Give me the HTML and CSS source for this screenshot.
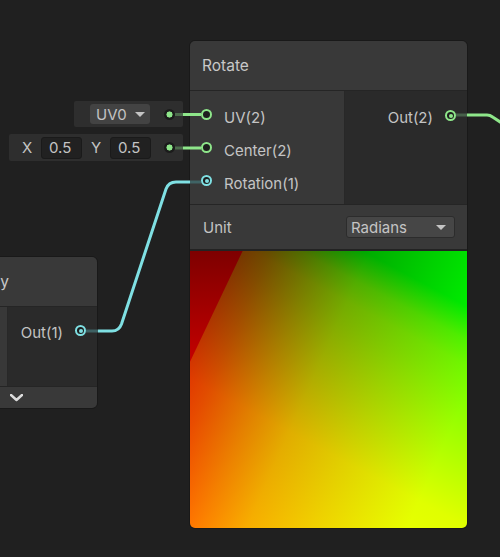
FILE: index.html
```html
<!DOCTYPE html>
<html>
<head>
<meta charset="utf-8">
<link rel="stylesheet" href="styles.css">
</head>
<body>
<div class="canvas">
  <div class="node node-multiply">
    <div class="title">Multiply</div>
    <div class="ports">
      <div class="inputs"></div>
      <div class="outputs">
        <div class="port-row out-row">
          <span class="label">Out(1)</span>
          <span class="port cyan connected"></span>
        </div>
      </div>
    </div>
    <div class="footer">
      <svg class="chevron" width="13" height="8" viewBox="0 0 13 8"><polyline points="1,1 6.5,6 12,1" fill="none" stroke="#dcdcdc" stroke-width="2.4" stroke-linecap="round" stroke-linejoin="round"/></svg>
    </div>
  </div>

  <div class="inline inline-uv">
    <div class="uv-button"><span>UV0</span><span class="tri"></span></div>
    <span class="dot"></span>
  </div>

  <div class="inline inline-xy">
    <span class="axis">X</span>
    <span class="field">0.5</span>
    <span class="axis">Y</span>
    <span class="field">0.5</span>
    <span class="dot"></span>
  </div>

  <div class="node node-rotate">
    <div class="title">Rotate</div>
    <div class="ports">
      <div class="inputs">
        <div class="port-row in-row"><span class="port green"></span><span class="label">UV(2)</span></div>
        <div class="port-row in-row"><span class="port green"></span><span class="label">Center(2)</span></div>
        <div class="port-row in-row"><span class="port cyan connected"></span><span class="label">Rotation(1)</span></div>
      </div>
      <div class="outputs">
        <div class="port-row out-row">
          <span class="label">Out(2)</span>
          <span class="port green connected"></span>
        </div>
      </div>
    </div>
    <div class="unit-row">
      <span class="label">Unit</span>
      <div class="dropdown"><span>Radians</span><span class="tri"></span></div>
    </div>
    <div class="preview"></div>
  </div>

  <svg class="edges" width="500" height="557" viewBox="0 0 500 557">
    <g fill="none" stroke-width="3">
      <path d="M175,114.5 H183" stroke="#4c6b4c"/>
      <path d="M183,114.5 H201" stroke="#8ee68a"/>
      <path d="M175,148 H183" stroke="#4c6b4c"/>
      <path d="M183,148 H201" stroke="#8ee68a"/>
      <path d="M456,115 H467" stroke="#47604a"/>
      <path d="M467,115 H487 Q490,115 493,117.2 L501,122.5" stroke="#8ee68a"/>
      <path d="M86,331 H98" stroke="#3e6163"/>
      <path d="M98,331 H112 Q119,331 121.5,324 L166,189 Q168.5,182 176,182 H190" stroke="#7fe0e3"/>
      <path d="M190,182 H201" stroke="#3f6365"/>
    </g>
  </svg>
</div>
</body>
</html>
```

FILE: styles.css
```css
* { box-sizing: border-box; }
html, body {
  margin: 0;
  padding: 0;
  background: #202020;
}
body {
  font-family: Inter, "Noto Sans", "Liberation Sans", sans-serif;
  color: #c4c4c4;
  font-size: 15px;
}
.canvas {
  position: relative;
  width: 500px;
  height: 557px;
  overflow: hidden;
  background: #202020;
}

/* nodes */
.node {
  position: absolute;
  border: 1px solid #191919;
  border-radius: 6px;
  overflow: hidden;
  display: flex;
  flex-direction: column;
}
.node-rotate { left: 189px; top: 40px; width: 279px; }
.node-multiply { left: -62px; top: 256px; width: 160px; }

.title {
  height: 50px;
  background: #393939;
  border-bottom: 1px solid #252525;
  display: flex;
  align-items: center;
  padding-left: 12px;
  font-size: 15.5px;
  color: #c8c8c8;
}
.ports {
  display: flex;
}
.node-rotate .ports { height: 113px; }
.node-multiply .ports { height: 79px; }
.inputs {
  background: #383838;
  border-right: 1px solid #282828;
  padding-top: 10px;
}
.node-rotate .inputs { width: 155px; }
.node-multiply .inputs { width: 69px; }
.outputs {
  flex: 1;
  background: #2a2a2a;
  padding-top: 10px;
}
.node-multiply .outputs { padding-top: 9px; }

.port-row {
  height: 33px;
  display: flex;
  align-items: center;
}
.in-row { padding-left: 11px; gap: 12px; }
.out-row { justify-content: flex-end; padding-right: 11px; gap: 12px; }

.port {
  width: 11px;
  height: 11px;
  border-radius: 50%;
  border: 2px solid;
  background: #1e1e1e;
  position: relative;
  top: -3px;
  flex: none;
}
.out-row .port { top: -2px; }
.port.green { border-color: #8ee68a; }
.port.cyan { border-color: #7fe0e3; }
.port.connected::after {
  content: "";
  position: absolute;
  left: 1.5px;
  top: 1.5px;
  width: 4px;
  height: 4px;
  border-radius: 50%;
}
.port.green.connected::after { background: #8ee68a; }
.port.cyan.connected::after { background: #7fe0e3; }

.footer {
  height: 22px;
  background: #393939;
  border-top: 1px solid #252525;
  display: flex;
  align-items: center;
  padding-left: 71px;
}

.unit-row {
  height: 47px;
  background: #393939;
  border-top: 1px solid #252525;
  border-bottom: 2px solid #232323;
  display: flex;
  align-items: center;
  justify-content: space-between;
  padding: 0 12px 0 13px;
}
.dropdown {
  width: 109px;
  height: 22px;
  background: #464646;
  border: 1px solid #2c2c2c;
  border-radius: 3px;
  display: flex;
  align-items: center;
  justify-content: space-between;
  padding: 0 8px 0 4px;
}
.tri {
  width: 0;
  height: 0;
  border-left: 5px solid transparent;
  border-right: 5px solid transparent;
  border-top: 5px solid #c4c4c4;
}
.preview {
  height: 277px;
  position: relative;
  background-color: #000;
  background-image:
    linear-gradient(114deg, rgb(0,13,0) 0%, rgb(0,77,0) 20%, rgb(0,128,0) 33%, rgb(0,173,0) 45%, rgb(0,209,0) 62%, rgb(0,235,0) 75%, rgb(0,255,0) 85%, rgb(0,255,0) 100%),
    linear-gradient(208deg, rgb(0,0,0) 0%, rgb(0,0,0) 13%, rgb(79,0,0) 21%, rgb(112,0,0) 27%, rgb(128,0,0) 33%, rgb(178,0,0) 50%, rgb(224,0,0) 65%, rgb(255,0,0) 100%);
  background-blend-mode: screen;
}
.preview::before {
  content: "";
  position: absolute;
  inset: 0;
  background: linear-gradient(to bottom, #7e0000 0%, #c40000 40%, #d00000 100%);
  clip-path: polygon(0 0, 19% 0, 0 40%);
}

/* inline default values */
.inline {
  position: absolute;
  background: #2e2e2e;
  border-radius: 2px;
  display: flex;
  align-items: center;
}
.inline-uv { left: 74px; top: 101px; width: 109px; height: 26px; padding-left: 16px; }
.inline-xy { left: 9px; top: 134px; width: 174px; height: 27px; padding-left: 13px; }
.uv-button {
  width: 60px;
  height: 20px;
  background: #434343;
  border-radius: 3px;
  display: flex;
  align-items: center;
  gap: 8px;
  padding-left: 6px;
}
.dot {
  width: 11px;
  height: 11px;
  border-radius: 50%;
  background: radial-gradient(circle, #8ee68a 0 2.8px, #1b1b1b 3.3px);
  margin-left: auto;
  margin-right: 8px;
}
.axis { width: 9px; margin-right: 10px; }
.field {
  height: 22px;
  width: 41px;
  background: #212121;
  border: 1px solid #1a1a1a;
  border-radius: 3px;
  display: flex;
  align-items: center;
  padding-left: 7px;
  margin-right: 9px;
}

.edges {
  position: absolute;
  left: 0;
  top: 0;
  pointer-events: none;
}
```
